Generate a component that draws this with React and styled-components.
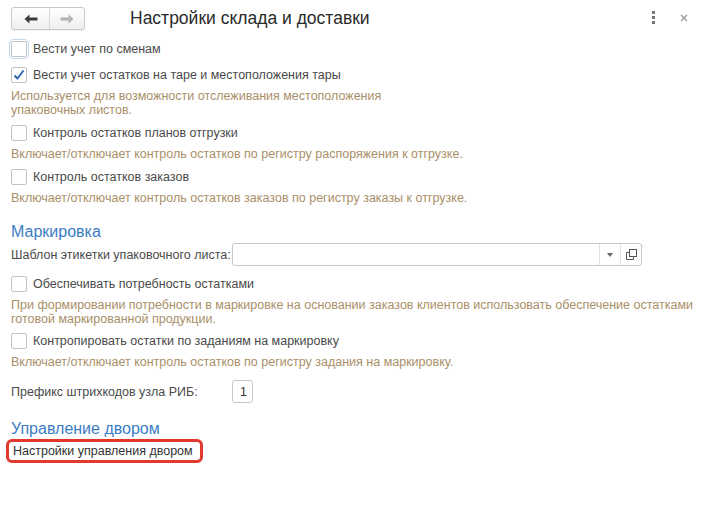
import React from "react";
import styled, { createGlobalStyle } from "styled-components";

const GlobalStyle = createGlobalStyle`
  html, body {
    margin: 0;
    padding: 0;
    background: #fff;
  }
  body {
    font-family: "Liberation Sans", Arial, sans-serif;
    font-size: 12.5px;
    color: #4a4a4a;
  }
`;

const Page = styled.div`
  width: 712px;
  height: 523px;
  box-sizing: border-box;
  padding: 0 10px 0 11px;
  display: flex;
  flex-direction: column;
`;

const Header = styled.div`
  height: 36px;
  display: flex;
  align-items: flex-start;
`;

const NavGroup = styled.div`
  margin-top: 7px;
  display: flex;
  height: 23px;
  box-sizing: border-box;
  border: 1px solid #c9c9c9;
  border-radius: 3px;
  background: linear-gradient(#ffffff, #eeeeee);
  box-shadow: 0 1px 1px rgba(0, 0, 0, 0.06);
`;

const NavButton = styled.div`
  width: ${({ $w }) => $w}px;
  display: flex;
  align-items: center;
  justify-content: center;
  & + & {
    border-left: 1px solid #d6d6d6;
  }
`;

const Title = styled.h1`
  margin: 7px 0 0 45px;
  font-size: 17.5px;
  font-weight: normal;
  color: #2a2a2a;
  line-height: 22px;
`;

const HeaderTools = styled.div`
  margin-left: auto;
  margin-top: 11px;
  display: flex;
  align-items: center;
  gap: 25px;
  padding-right: 14px;
`;

const Dots = styled.div`
  display: flex;
  flex-direction: column;
  gap: 2px;
  span {
    width: 3px;
    height: 3px;
    background: #777;
  }
`;

const CheckRow = styled.label`
  height: 26px;
  margin-top: ${({ $mt }) => $mt || 0}px;
  display: flex;
  align-items: center;
  gap: 6px;
  color: #4a4a4a;
  white-space: nowrap;
`;

const Box = styled.span`
  width: 16px;
  height: 16px;
  box-sizing: border-box;
  border: 1px solid #c2c2c2;
  border-radius: 2px;
  background: #fff;
  display: flex;
  align-items: center;
  justify-content: center;
  outline: ${({ $focus }) => ($focus ? "1px solid #c3d9f2" : "none")};
  outline-offset: 1px;
`;

const Note = styled.div`
  padding-top: 1px;
  margin-bottom: ${({ $mb }) => $mb || 0}px;
  line-height: 14px;
  color: #a98f68;
  white-space: nowrap;
`;

const GroupTitle = styled.div`
  margin-top: ${({ $mt }) => $mt}px;
  height: 20px;
  line-height: 20px;
  font-size: 16px;
  color: #3b7dc4;
`;

const FieldRow = styled.div`
  margin-top: ${({ $mt }) => $mt || 0}px;
  height: 23px;
  display: flex;
  align-items: center;
`;

const FieldLabel = styled.div`
  width: 221px;
  white-space: nowrap;
  color: #4a4a4a;
`;

const Input = styled.div`
  width: ${({ $w }) => $w}px;
  height: 23px;
  box-sizing: border-box;
  border: 1px solid #c6c6c6;
  border-radius: 3px;
  display: flex;
  align-items: center;
  justify-content: flex-end;
  background: #fff;
  color: #333;
`;

const InputText = styled.span`
  padding-right: 5px;
`;

const InputButton = styled.div`
  width: 20px;
  height: 100%;
  border-left: 1px solid #e2e2e2;
  display: flex;
  align-items: center;
  justify-content: center;
`;

const LinkBox = styled.div`
  margin-left: -5px;
  align-self: flex-start;
  height: 24px;
  box-sizing: border-box;
  padding: 0 7px 0 4px;
  border: 3px solid #e2392e;
  border-radius: 6px;
  display: flex;
  align-items: center;
  color: #333;
  white-space: nowrap;
`;

const Check = ({ checked, focus }) => (
  <Box $focus={focus}>
    {checked && (
      <svg width="14" height="14" viewBox="0 0 14 14">
        <path d="M2.5 7.5 L5.5 10.5 L11.5 2.5" fill="none" stroke="#2f68b0" strokeWidth="2" />
      </svg>
    )}
  </Box>
);

const Arrow = ({ dir, color }) => (
  <svg width="14" height="10" viewBox="0 0 14 10" style={{ transform: dir === "right" ? "scaleX(-1)" : "none" }}>
    <path d="M0.5 5 L5.5 0.5 L5.5 3.5 L13.5 3.5 L13.5 6.5 L5.5 6.5 L5.5 9.5 Z" fill={color} />
  </svg>
);

export default function App() {
  return (
    <>
      <GlobalStyle />
      <Page>
        <Header>
          <NavGroup>
            <NavButton $w={37}>
              <Arrow dir="left" color="#3c3c3c" />
            </NavButton>
            <NavButton $w={34}>
              <Arrow dir="right" color="#b3b3b3" />
            </NavButton>
          </NavGroup>
          <Title>Настройки склада и доставки</Title>
          <HeaderTools>
            <Dots>
              <span />
              <span />
              <span />
            </Dots>
            <svg width="8" height="8" viewBox="0 0 8 8">
              <path d="M1 1 L7 7 M7 1 L1 7" stroke="#9a9a9a" strokeWidth="1.4" />
            </svg>
          </HeaderTools>
        </Header>

        <CheckRow>
          <Check focus />
          Вести учет по сменам
        </CheckRow>
        <CheckRow>
          <Check checked />
          Вести учет остатков на таре и местоположения тары
        </CheckRow>
        <Note $mb={3}>
          Используется для возможности отслеживания местоположения
          <br />
          упаковочных листов.
        </Note>

        <CheckRow>
          <Check />
          Контроль остатков планов отгрузки
        </CheckRow>
        <Note $mb={3}>Включает/отключает контроль остатков по регистру распоряжения к отгрузке.</Note>

        <CheckRow>
          <Check />
          Контроль остатков заказов
        </CheckRow>
        <Note>Включает/отключает контроль остатков заказов по регистру заказы к отгрузке.</Note>

        <GroupTitle $mt={17}>Маркировка</GroupTitle>
        <FieldRow $mt={1}>
          <FieldLabel>Шаблон этикетки упаковочного листа:</FieldLabel>
          <Input $w={410}>
            <InputButton>
              <svg width="6" height="4" viewBox="0 0 6 4">
                <path d="M0 0 L6 0 L3 4 Z" fill="#666" />
              </svg>
            </InputButton>
            <InputButton>
              <svg width="11" height="11" viewBox="0 0 11 11">
                <rect x="3.5" y="0.5" width="7" height="7" fill="#fff" stroke="#555" />
                <path d="M3.5 3.5 H0.5 V10.5 H7.5 V7.5" fill="none" stroke="#555" />
              </svg>
            </InputButton>
          </Input>
        </FieldRow>

        <CheckRow $mt={5}>
          <Check />
          Обеспечивать потребность остатками
        </CheckRow>
        <Note $mb={2}>
          При формировании потребности в маркировке на основании заказов клиентов использовать обеспечение остатками
          <br />
          готовой маркированной продукции.
        </Note>

        <CheckRow>
          <Check />
          Контропировать остатки по заданиям на маркировку
        </CheckRow>
        <Note>Включает/отключает контроль остатков по регистру задания на маркировку.</Note>

        <FieldRow $mt={11}>
          <FieldLabel>Префикс штрихкодов узла РИБ:</FieldLabel>
          <Input $w={21}>
            <InputText>1</InputText>
          </Input>
        </FieldRow>

        <GroupTitle $mt={16}>Управление двором</GroupTitle>
        <LinkBox>Настройки управления двором</LinkBox>
      </Page>
    </>
  );
}
